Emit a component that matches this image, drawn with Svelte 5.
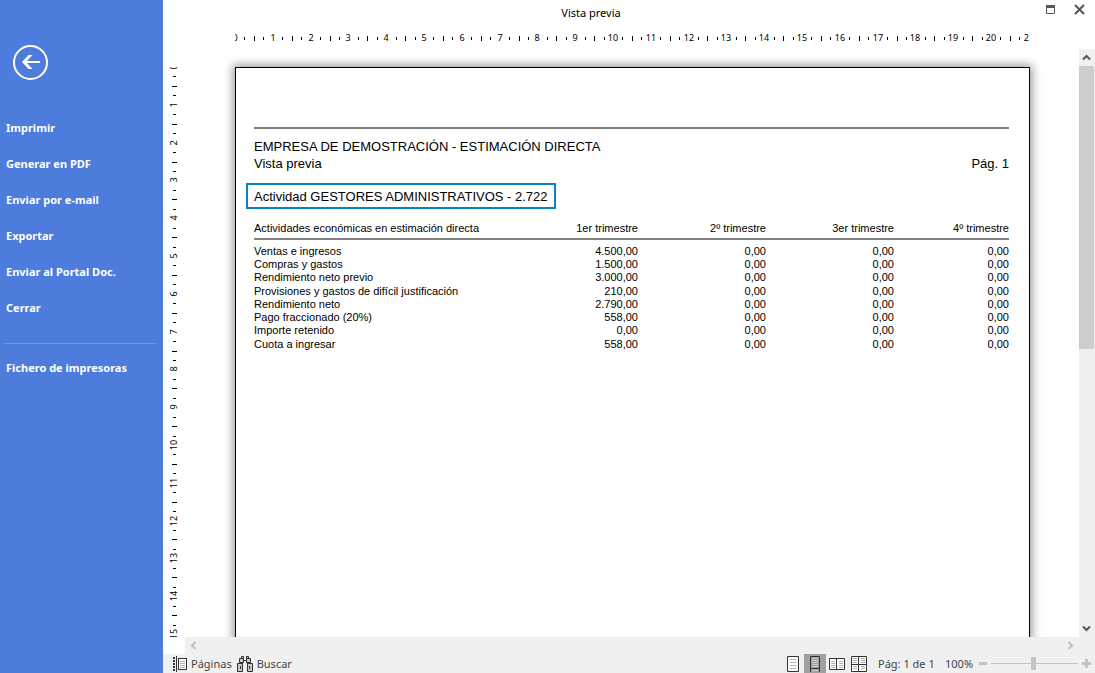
<script>
  const actions = ['Imprimir', 'Generar en PDF', 'Enviar por e-mail', 'Exportar', 'Enviar al Portal Doc.', 'Cerrar'];

  const headers = ['1er trimestre', '2º trimestre', '3er trimestre', '4º trimestre'];
  const rows = [
    ['Ventas e ingresos', '4.500,00'],
    ['Compras y gastos', '1.500,00'],
    ['Rendimiento neto previo', '3.000,00'],
    ['Provisiones y gastos de difícil justificación', '210,00'],
    ['Rendimiento neto', '2.790,00'],
    ['Pago fraccionado (20%)', '558,00'],
    ['Importe retenido', '0,00'],
    ['Cuota a ingresar', '558,00']
  ].map(([label, first]) => ({ label, values: [first, '0,00', '0,00', '0,00'] }));

  // Pixels per centimetre at 100% zoom
  const CM = 37.8;

  function marks(count) {
    const ticks = [];
    for (let q = 1; q < count * 4; q++) {
      if (q % 4) ticks.push({ pos: Math.round((q * CM) / 4), half: q % 4 === 2 });
    }
    const labels = Array.from({ length: count + 1 }, (_, n) => ({ n, pos: Math.round(n * CM) }));
    return { ticks, labels };
  }

  const across = marks(21);
  const down = marks(15);
  let zoom = $state(49);
</script>

<div class="app">
  <nav class="sidebar">
    <button class="back" aria-label="Volver">
      <svg width="36" height="36" viewBox="0 0 36 36">
        <circle cx="17.5" cy="17.5" r="16.5" fill="none" stroke="#fff" stroke-width="2" />
        <path d="M9 17 15.500 10h4l-5.500 6h13v2H14l5.500 6h-4z" fill="#fff" />
      </svg>
    </button>
    {#each actions as action}
      <button class="item">{action}</button>
    {/each}
    <hr />
    <button class="item">Fichero de impresoras</button>
  </nav>

  <main class="main">
    <header class="titlebar">
      <h1>Vista previa</h1>
      <div class="controls">
        <button aria-label="Maximizar">
          <svg width="11" height="11" viewBox="0 0 11 11"><path d="M1.5 1.5h8v8h-8z" fill="none" stroke="#555" /><path d="M1 1h9v3H1z" fill="#555" /></svg>
        </button>
        <button aria-label="Cerrar ventana">
          <svg width="11" height="11" viewBox="0 0 11 11"><path d="M1 1l9 9M10 1l-9 9" fill="none" stroke="#555" stroke-width="2" /></svg>
        </button>
      </div>
    </header>

    <div class="ruler-x">
      <svg class="scale-x" aria-hidden="true">
        {#each across.ticks as t}
          <rect x={t.pos} y={t.half ? 11 : 12} width="1" height={t.half ? 5 : 3} />
        {/each}
        {#each across.labels as l}
          <text x={l.pos} y="16">{l.n}</text>
        {/each}
      </svg>
    </div>

    <div class="ruler-y">
      <svg class="scale-y" aria-hidden="true">
        {#each down.ticks as t}
          <rect x={t.half ? 9 : 10} y={t.pos} width={t.half ? 5 : 3} height="1" />
        {/each}
        {#each down.labels as l}
          <text transform="translate(14 {l.pos}) rotate(-90)">{l.n}</text>
        {/each}
      </svg>
    </div>

    <div class="viewport">
      <article class="paper">
        <div class="heading">
          <p>EMPRESA DE DEMOSTRACIÓN - ESTIMACIÓN DIRECTA</p>
          <p class="split"><span>Vista previa</span><span>Pág. 1</span></p>
        </div>
        <h2>Actividad GESTORES ADMINISTRATIVOS - 2.722</h2>
        <table>
          <colgroup>
            <col /><col class="q" /><col class="q" /><col class="q" /><col class="q4" />
          </colgroup>
          <thead>
            <tr>
              <th scope="col">Actividades económicas en estimación directa</th>
              {#each headers as h}<th scope="col">{h}</th>{/each}
            </tr>
          </thead>
          <tbody>
            {#each rows as row}
              <tr>
                <th scope="row">{row.label}</th>
                {#each row.values as v}<td>{v}</td>{/each}
              </tr>
            {/each}
          </tbody>
        </table>
      </article>
    </div>

    <div class="scroll-y">
      <button aria-label="Subir"><svg width="9" height="7" viewBox="0 0 9 7"><path d="M1 5.5l3.5-3.5L8 5.5" fill="none" stroke="#555" stroke-width="2" /></svg></button>
      <div class="track"><div class="thumb"></div></div>
      <button aria-label="Bajar"><svg width="9" height="7" viewBox="0 0 9 7"><path d="M1 1.5L4.5 5 8 1.5" fill="none" stroke="#555" stroke-width="2" /></svg></button>
    </div>

    <div class="scroll-x">
      <button aria-label="Izquierda"><svg width="7" height="9" viewBox="0 0 7 9"><path d="M5.5 1L2 4.5 5.5 8" fill="none" stroke="#bfbfbf" stroke-width="2" /></svg></button>
      <button aria-label="Derecha"><svg width="7" height="9" viewBox="0 0 7 9"><path d="M1.5 1L5 4.5 1.5 8" fill="none" stroke="#bfbfbf" stroke-width="2" /></svg></button>
    </div>

    <footer class="status">
      <button class="tool">
        <svg width="14" height="16" viewBox="0 0 14 16">
          <path d="M1 1v14" stroke="#333" stroke-width="2" stroke-dasharray="2 1" />
          <path d="M3.5 0v16" stroke="#333" />
          <rect x="5.5" y="2.5" width="8" height="11" fill="#fff" stroke="#333" />
          <path d="M7 5.5h5M7 7.5h5M7 9.5h5M7 11.5h5" stroke="#b0b0b0" />
        </svg>
        Páginas
      </button>
      <button class="tool">
        <svg width="16" height="16" viewBox="0 0 16 16" fill="#c8c8c8" stroke="#333">
          <path d="M4.5.5h2v2h-2zM9.5.5h2v2h-2z" />
          <path d="M2.5 2.5h4v4h-4zM9.5 2.5h4v4h-4zM6.5 4.5h3" />
          <path d="M.5 7.5h5v8h-5zM10.5 7.5h5v8h-5z" />
          <path d="M5.5 6.5v3M10.5 6.5v3M3.5 10v3M12.5 10v3" fill="none" />
        </svg>
        Buscar
      </button>
      <div class="views">
        <button aria-label="Página completa">
          <svg width="12" height="16" viewBox="0 0 12 16"><path d="M.5.5h11v15H.5z" fill="#fff" stroke="#333" /><path d="M3 3.5h6M3 6.5h6M3 9.5h6M3 12.5h6" stroke="#b0b0b0" /></svg>
        </button>
        <button class="active" aria-label="Ancho de página" aria-pressed="true">
          <svg width="10" height="16" viewBox="0 0 10 16"><path d="M.5 16V.5h9V16M.5 12.5h9" fill="none" stroke="#333" /><path d="M2 2.5h6M2 4.5h6M2 6.5h6M2 8.5h6M2 10.5h6M2 14.5h6" stroke="#c8c8c8" /></svg>
        </button>
        <button aria-label="Dos páginas">
          <svg width="16" height="12" viewBox="0 0 16 12"><path d="M.5.5h15v11H.5zM7.5.5v11" fill="#fff" stroke="#333" /><path d="M2 3.5h4M2 5.5h4M2 7.5h4M2 9.5h4M10 3.5h4M10 5.5h4M10 7.5h4M10 9.5h4" stroke="#b0b0b0" /></svg>
        </button>
        <button aria-label="Varias páginas">
          <svg width="16" height="16" viewBox="0 0 16 16"><path d="M.5.5h15v15H.5zM7.5.5v15M.5 8.5h15" fill="#fff" stroke="#333" /><path d="M2 2.5h4M2 4.5h4M2 6.5h4M10 2.5h4M10 4.5h4M10 6.5h4M2 10.5h4M2 12.5h4M10 10.5h4M10 12.5h4" stroke="#b0b0b0" /></svg>
        </button>
      </div>
      <span class="count">Pág: 1 de 1</span>
      <span class="percent">100%</span>
      <div class="zoom">
        <button aria-label="Reducir"><svg width="8" height="3"><rect width="8" height="3" fill="#c3c3c3" /></svg></button>
        <input type="range" aria-label="Zoom" bind:value={zoom} />
        <button aria-label="Ampliar"><svg width="9" height="9" viewBox="0 0 9 9"><path d="M3 0h3v3h3v3H6v3H3V6H0V3h3z" fill="#c3c3c3" /></svg></button>
      </div>
    </footer>
  </main>
</div>

<style>
  :global(body) {
    background: #fff;
  }

  .app {
    display: grid;
    grid-template-columns: 163px minmax(0, 1fr);
    grid-template-rows: minmax(0, 1fr);
    height: 100vh;
    overflow: hidden;
    font: 11px/16px 'Noto Sans', sans-serif;
    color: #444;
  }

  button {
    display: flex;
    align-items: center;
    justify-content: center;
    margin: 0;
    padding: 0;
    border: 0;
    background: none;
    color: inherit;
    font: inherit;
  }

  svg {
    display: block;
    flex: none;
  }

  /* Sidebar */
  .sidebar {
    display: flex;
    flex-direction: column;
    background: #4d7cdd;
  }

  .back {
    align-self: flex-start;
    margin: 45px 0 29px 13px;
  }

  .item {
    justify-content: flex-start;
    height: 36px;
    padding-left: 6px;
    color: #fff;
    font: 700 11px/16px 'Noto Sans', sans-serif;
  }

  hr {
    width: 150px;
    height: 1px;
    margin: 17px 5px 6px;
    border: 0;
    background: #7098ee;
  }

  /* Preview area */
  .main {
    display: grid;
    grid-template-columns: 22px minmax(0, 1fr) 16px;
    grid-template-rows: 25px 24px minmax(0, 1fr) 17px 19px;
  }

  .titlebar {
    grid-column: 1 / -1;
    display: flex;
    align-items: center;
  }

  h1 {
    flex: 1;
    margin: 0;
    color: #000;
    font: inherit;
    text-align: center;
  }

  .controls {
    display: flex;
    align-self: flex-start;
    justify-content: flex-end;
    gap: 18px;
    width: 66px;
    padding: 4px 10px 0 0;
  }

  .ruler-x {
    grid-column: 2;
    display: flex;
    justify-content: center;
    padding-left: 1px;
  }

  .scale-x {
    width: 795px;
    height: 24px;
  }

  .ruler-y {
    grid-area: 3 / 1 / 4 / 2;
    display: flex;
    flex-direction: column;
    padding-top: 18px;
    overflow: hidden;
  }

  .scale-y {
    width: 22px;
    height: 1123px;
  }

  .scale-x,
  .scale-y {
    overflow: hidden;
    fill: #000;
    font-size: 9px;
    text-anchor: middle;
  }

  .viewport {
    grid-area: 3 / 2 / 4 / 3;
    display: flex;
    align-items: flex-start;
    justify-content: center;
    padding: 18px 0 0 1px;
    overflow: hidden;
  }

  .paper {
    box-sizing: border-box;
    flex: none;
    width: 795px;
    min-height: 1123px;
    padding: 59px 20px 0 18px;
    border: 1px solid #000;
    background: #fff;
    box-shadow: 0 0 9px 2px rgba(0, 0, 0, 0.4);
    color: #000;
    font: 13px/17px 'Liberation Sans', Arial, sans-serif;
  }

  .heading {
    padding-top: 9px;
    border-top: 2px solid #808080;
  }

  p {
    margin: 0;
  }

  .split {
    display: flex;
    justify-content: space-between;
  }

  h2 {
    box-sizing: border-box;
    width: fit-content;
    height: 26px;
    margin: 11px 0 11px -8px;
    padding: 3px 6px;
    border: 2px solid #0a83c6;
    font: inherit;
  }

  table {
    width: 100%;
    border-collapse: collapse;
    table-layout: fixed;
    font-size: 11px;
    line-height: 13px;
  }

  .q {
    width: 128px;
  }

  .q4 {
    width: 115px;
  }

  th,
  td {
    padding: 0;
    font-weight: normal;
    text-align: right;
    white-space: nowrap;
  }

  th:first-child {
    text-align: left;
  }

  thead th {
    padding: 2px 0 3px;
    border-bottom: 2px solid #808080;
  }

  tbody tr:first-child > * {
    padding-top: 5px;
  }

  tbody tr:nth-child(4n) > * {
    padding-top: 1px;
  }

  /* Scroll bars */
  .scroll-y {
    grid-area: 3 / 3 / 4 / 4;
    display: flex;
    flex-direction: column;
    padding-right: 1px;
    background: #f0f0f0;
  }

  .scroll-y button {
    height: 17px;
  }

  .track {
    flex: 1;
  }

  .thumb {
    height: 51%;
    background: #cdcdcd;
  }

  .scroll-x {
    grid-area: 4 / 2 / 5 / 4;
    display: flex;
    justify-content: space-between;
    padding-right: 16px;
    background: #f0f0f0;
  }

  .scroll-x button {
    width: 17px;
  }

  /* Status bar */
  .status {
    grid-column: 1 / -1;
    display: flex;
    align-items: center;
    padding: 0 4px 0 10px;
    background: #f0f0f0;
  }

  .tool {
    gap: 4px;
    margin-right: 5px;
  }

  .views {
    display: flex;
    align-self: stretch;
    margin-left: auto;
  }

  .views button {
    width: 22px;
  }

  .views .active {
    background: #a0a0a0;
  }

  .count {
    width: 67px;
    margin-left: 8px;
  }

  .percent {
    width: 34px;
  }

  .zoom {
    display: flex;
    align-items: center;
    gap: 4px;
  }

  input {
    width: 87px;
    height: 13px;
    margin: 0;
    background: linear-gradient(#c3c3c3, #c3c3c3) center / 100% 1px no-repeat;
    appearance: none;
  }

  input::-webkit-slider-thumb {
    width: 5px;
    height: 13px;
    background: #c3c3c3;
    appearance: none;
  }
</style>
